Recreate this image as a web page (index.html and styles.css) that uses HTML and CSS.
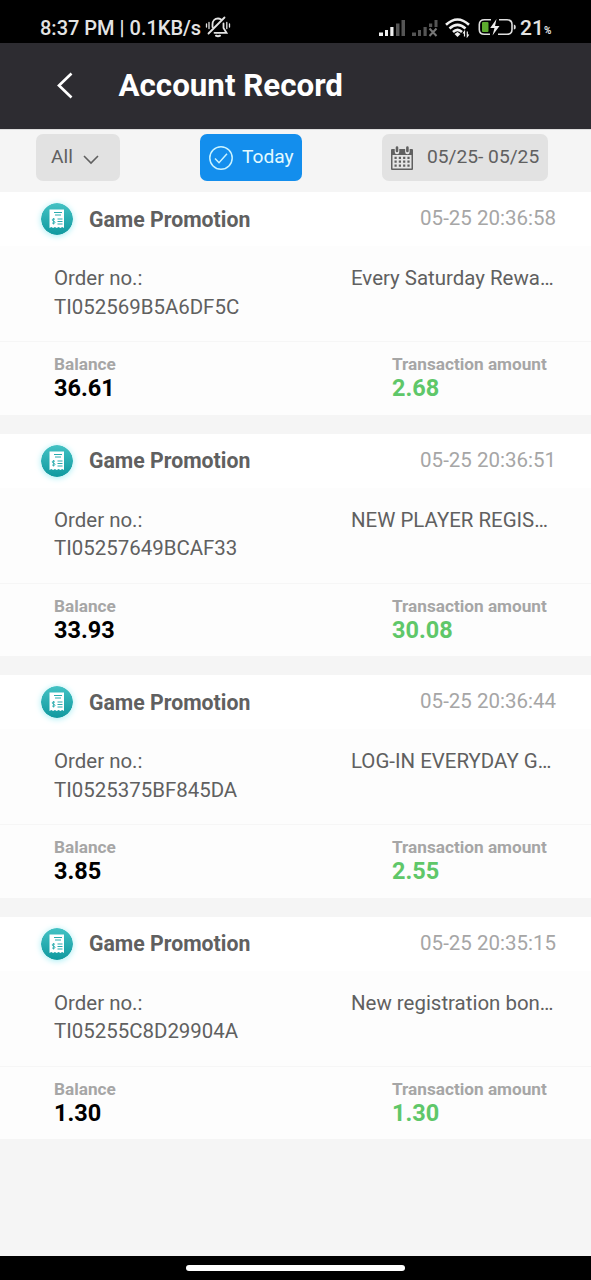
FILE: index.html
```
<!DOCTYPE html>
<html lang="en">
<head>
<meta charset="utf-8">
<title>Account Record</title>
<link rel="stylesheet" href="styles.css">
</head>
<body>
<svg class="defs" width="0" height="0">
  <defs>
    <linearGradient id="teal" x1="0" y1="0" x2="0" y2="1"><stop offset="0" stop-color="#43c2c4"/><stop offset="1" stop-color="#10999f"/></linearGradient>
    <symbol id="receipt" viewBox="0 0 32 32">
      <circle cx="16" cy="16" r="16" fill="url(#teal)"/>
      <path d="M8.500 6.500h14.500v18.500l-1.800-1-1.800 1-1.800-1-1.850 1-1.850-1-1.800 1-1.800-1-1.800 1z" fill="#fff"/>
      <path d="M13 9.500h8M14 12h6M16.500 16h5M16.500 18.500h5M16.500 21h5" stroke="#2aabae" stroke-width="1"/>
      <path d="M14 16.500c-.8-1-3-.8-2.800.6.200 1.300 2.800.8 2.800 2.200 0 1.400-2.200 1.500-3 .4M12.600 15v6.500" fill="none" stroke="#2aabae" stroke-width=".9"/>
    </symbol>
  </defs>
</svg>
<div class="screen">
  <div class="status">
    <span class="clock">8:37 PM | 0.1KB/s</span>
    <svg class="bell" width="26" height="22" viewBox="0 0 26 22" fill="none" stroke="#e4e4e4" stroke-width="1.800" stroke-linecap="round">
      <path d="M3.500 17.500L19.500 1.500M7.500 11V8.500c0-3.700 2.300-6 5.500-6 1.200 0 2 .2 2.800.7M18.500 7.500v4.500l3 4.800H9.500"/>
      <path d="M11 19.700q2 1.200 4 0" stroke-width="2"/><path d="M1.500 8v3M4 6.500v6M21.800 6.500v6M24.500 8v3" stroke-width="1.300"/>
    </svg>
    <svg class="signals" width="60" height="18" viewBox="0 0 60 18">
      <path d="M0 17v-3.500h4V17zM6 17v-6h3v6zM11.300 17V8h3.200v9z" fill="#f0f0f0"/>
      <path d="M17 17V4.500h3.500V17zM22.500 17V1H26v16z" fill="#555"/>
      <path d="M33 17v-3.500h4V17zM39 17v-6h3v6zM44.500 17V8h3.200v9zM50 8V4.500h3.200V8zM55.500 8V1h3v7z" fill="#555"/>
      <path d="M50.500 9.500l7 7.500M57.500 9.500l-7 7.500" stroke="#777" stroke-width="2"/>
    </svg>
    <svg class="wifi" width="26" height="20" viewBox="0 0 26 20" fill="none" stroke="#f0f0f0" stroke-width="2.600">
      <path d="M1 6.800q11.500-10.600 23 0M4.500 10.500q8-7.300 16 0M8 14q4.500-4.200 9 0"/><path d="M9.500 16l3-2 3 2-3 3z" fill="#f0f0f0" stroke="none"/>
      <path d="M19.500 18.500v-5l-1.500 2M22.300 13.500v5l1.500-2" stroke-width="1.200"/>
    </svg>
    <svg class="battery" width="39" height="19" viewBox="0 0 39 19">
      <path d="M13 1.800H6.500Q1.300 1.800 1.300 6.500v5q0 4.700 5.200 4.700H12M21 1.800h8Q34 1.800 34 6.500v5q0 4.700-5 4.700h-9" fill="none" stroke="#dedede" stroke-width="1.600"/>
      <rect x="4" y="4" width="6.500" height="10" rx="1" fill="#5dac2e"/><path d="M18.500 1l-6.300 9h4.300l-2 7.500 7-9.500h-4.500z" fill="#eee"/><path d="M35.800 6.500q2 0 2 2.500t-2 2.500z" fill="#ddd"/>
    </svg>
    <span class="charge">21</span><span class="percent">%</span>
  </div>
  <header class="titlebar">
    <svg class="back" width="18" height="28" viewBox="0 0 18 28"><path d="M15.500 2.500L3 14.500l12.500 12" fill="none" stroke="#fff" stroke-width="2.700"/></svg>
    <h1>Account Record</h1>
  </header>
  <div class="filters">
    <div class="chip all"><span>All</span><svg width="16" height="10" viewBox="0 0 16 10"><path d="M1 1l7 7 7-7" fill="none" stroke="#606060" stroke-width="1.600"/></svg></div>
    <div class="chip today"><svg width="24" height="24" viewBox="0 0 24 24" fill="none" stroke="#c9f3ff" stroke-width="1.500"><circle cx="12" cy="12" r="11.200"/><path d="M6 12.500l4 4.200 8-9"/></svg><span>Today</span></div>
    <div class="chip dates">
      <svg width="22" height="24" viewBox="0 0 22 24"><path d="M0 4q0-1 1-1h20q1 0 1 1v19q0 1-1 1H1q-1 0-1-1z" fill="#606060"/><path d="M1.500 9h19v13.500h-19z" fill="#e5e5e5"/><path d="M6 3v3M16.400 3v3" stroke="#e5e5e5" stroke-width="4.500" stroke-linecap="round"/><path d="M6 1.500v3.500M16.400 1.500v3.500" stroke="#606060" stroke-width="2.600" stroke-linecap="round"/><path d="M3.500 11.800h16M3.500 15.700h16M3.500 19.600h16" stroke="#606060" stroke-width="2.200" stroke-dasharray="2.200 2.100"/></svg>
      <span>05/25- 05/25</span>
    </div>
  </div>
  <main class="records">
    <article class="record">
      <div class="head"><svg class="badge"><use href="#receipt"/></svg><h2>Game Promotion</h2><time>05-25 20:36:58</time></div>
      <div class="order"><p class="number">Order no.:<br>TI052569B5A6DF5C</p><p class="note">Every Saturday Rewa…</p></div>
      <div class="totals"><div class="total balance"><small>Balance</small><b>36.61</b></div><div class="total"><small>Transaction amount</small><b class="gain">2.68</b></div></div>
    </article>
    <article class="record">
      <div class="head"><svg class="badge"><use href="#receipt"/></svg><h2>Game Promotion</h2><time>05-25 20:36:51</time></div>
      <div class="order"><p class="number">Order no.:<br>TI05257649BCAF33</p><p class="note">NEW PLAYER REGIS…</p></div>
      <div class="totals"><div class="total balance"><small>Balance</small><b>33.93</b></div><div class="total"><small>Transaction amount</small><b class="gain">30.08</b></div></div>
    </article>
    <article class="record">
      <div class="head"><svg class="badge"><use href="#receipt"/></svg><h2>Game Promotion</h2><time>05-25 20:36:44</time></div>
      <div class="order"><p class="number">Order no.:<br>TI0525375BF845DA</p><p class="note">LOG-IN EVERYDAY G…</p></div>
      <div class="totals"><div class="total balance"><small>Balance</small><b>3.85</b></div><div class="total"><small>Transaction amount</small><b class="gain">2.55</b></div></div>
    </article>
    <article class="record">
      <div class="head"><svg class="badge"><use href="#receipt"/></svg><h2>Game Promotion</h2><time>05-25 20:35:15</time></div>
      <div class="order"><p class="number">Order no.:<br>TI05255C8D29904A</p><p class="note">New registration bon…</p></div>
      <div class="totals"><div class="total balance"><small>Balance</small><b>1.30</b></div><div class="total"><small>Transaction amount</small><b class="gain">1.30</b></div></div>
    </article>
  </main>
  <footer class="navbar"><div class="pill"></div></footer>
</div>
</body>
</html>
```
FILE: styles.css
```
* { box-sizing: border-box; }
body { margin: 0; font-family: Roboto, "Liberation Sans", sans-serif; background: #f5f5f5; color: #606060; }
h1, h2, p { margin: 0; }
svg { display: block; flex: none; }
.defs { position: absolute; }
.screen { width: 591px; height: 1280px; display: flex; flex-direction: column; overflow: hidden; }

.status { height: 43px; flex: none; background: #000; color: #e4e4e4; display: flex; align-items: center; padding: 12px 0 0 40px; white-space: nowrap; }
.clock { width: 165px; font-size: 20px; font-weight: 500; }
.bell { margin-bottom: 2px; }
.signals { margin-left: 148px; }
.wifi { margin-left: 6px; }
.battery { margin-left: 7px; }
.charge { margin-left: 3px; font-size: 21px; font-weight: 500; }
.percent { font-size: 10px; font-weight: 700; padding-top: 6px; }

.titlebar { height: 86px; flex: none; background: #2d2c31; display: flex; align-items: center; padding-left: 56px; }
.titlebar .back { margin-bottom: 2px; }
.titlebar h1 { margin-left: 44.500px; font-size: 31.300px; line-height: 36px; padding-bottom: 1px; font-weight: 700; color: #fff; white-space: nowrap; }

.filters { height: 63px; flex: none; display: flex; padding: 4px 0 0 36px; border-top: 1px solid #ddd; }
.chip { height: 47px; border-radius: 7px; background: #e2e2e2; display: flex; align-items: center; font-size: 19.200px; white-space: nowrap; }
.chip span { line-height: 24px; padding-bottom: 2px; }
.all { width: 84px; padding-left: 15px; }
.all svg { margin: 4px 0 0 10px; }
.today { width: 102px; margin-left: 80px; padding-left: 9px; background: #138eed; color: #e2faff; }
.today svg { margin-right: 9px; }
.dates { width: 166px; margin-left: 80px; padding-left: 9px; }
.dates svg { margin-right: 14px; }

.records { flex: 1; display: flex; flex-direction: column; gap: 19px; }
.record { height: 222.500px; flex: none; display: flex; flex-direction: column; background: #fdfdfd; }
.head { height: 54px; display: flex; align-items: center; padding: 0 35px 0 41px; background: #fff; }
.badge { width: 32px; height: 32px; border-radius: 50%; box-shadow: 0 1px 6px #a5eef4; }
.head h2 { margin-left: 16px; font-size: 21.250px; font-weight: 700; white-space: nowrap; }
.head time { margin-left: auto; font-size: 20.500px; color: #a6a6a6; padding-bottom: 2px; }
.order { height: 95px; padding: 18px 0 0 54px; display: flex; font-size: 20.450px; line-height: 28.500px; white-space: nowrap; }
.number { width: 297px; }
.totals { flex: 1; border-top: 1px solid #f6f6f6; padding: 12px 0 0 54px; display: flex; white-space: nowrap; }
.total { display: flex; flex-direction: column; }
.balance { width: 338px; }
.total small { font-size: 17.200px; line-height: 20px; font-weight: 700; color: #a6a6a6; }
.total b { font-size: 23.500px; line-height: 29px; color: #000; }
.total .gain { color: #5fc769; }

.navbar { height: 24px; flex: none; background: #000; display: flex; justify-content: center; padding-top: 9px; }
.pill { width: 219px; height: 6px; border-radius: 3px; background: #fff; }
```
